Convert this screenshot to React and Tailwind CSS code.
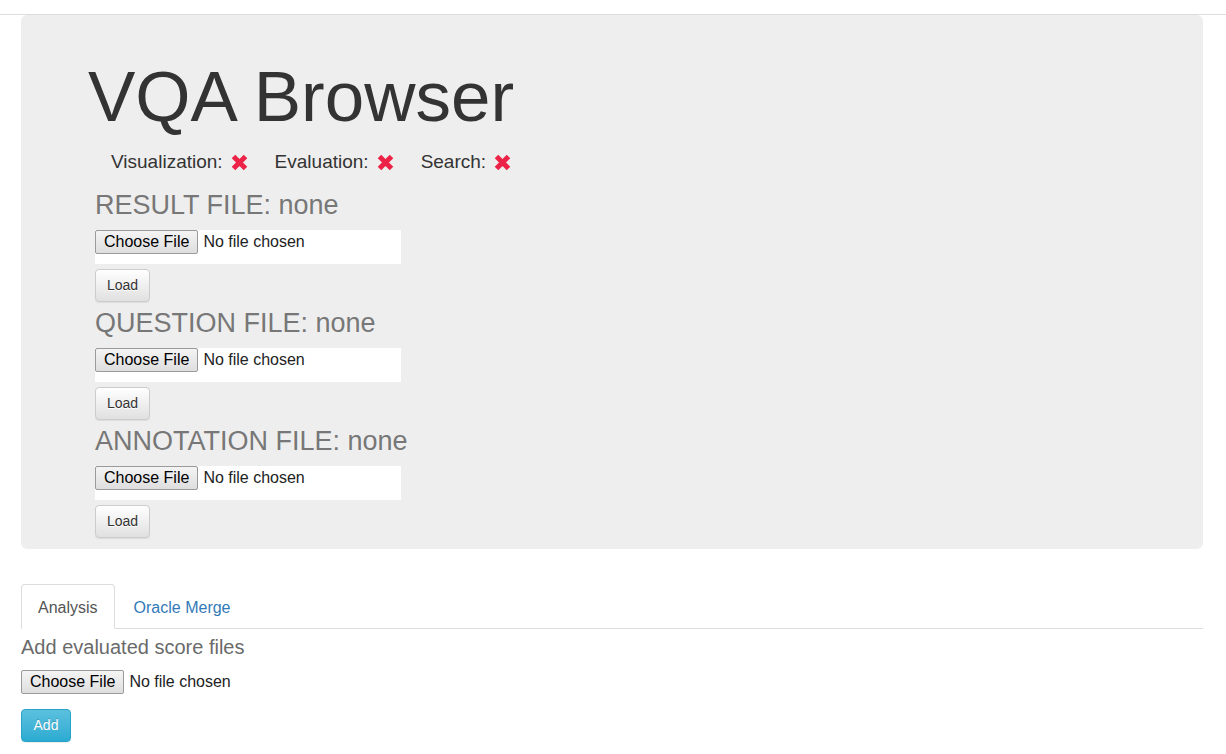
import React from "react"

function RemoveIcon() {
    return (
        <svg width="17" height="17" viewBox="0 0 17 17" className="shrink-0">
            <path d="M2.5 2.5 L14.5 14.5 M14.5 2.5 L2.5 14.5" stroke="#ec2346" strokeWidth="5" strokeLinecap="butt" fill="none" />
        </svg>
    )
}

function FakeFileInput() {
    return (
        <div className="flex items-center text-[16px] leading-none text-[#222]">
            <span className="flex h-[24px] items-center rounded-[2px] border border-[#9a9a9a] bg-linear-to-b from-[#f4f4f4] to-[#dedede] px-[8px] text-black">
                Choose File
            </span>
            <span className="ml-[5px]">No file chosen</span>
        </div>
    )
}

function LoadButton({ label }) {
    return (
        <button className="flex h-[33px] items-center rounded-[4px] border border-[#ccc] bg-linear-to-b from-white to-[#e0e0e0] px-[11px] text-[14px] text-[#333] shadow-[0_1px_1px_rgba(0,0,0,0.075)] [text-shadow:0_1px_0_#fff]">
            {label}
        </button>
    )
}

function FileSection({ title, first }) {
    return (
        <div className={first ? "" : "mt-[6px]"}>
            <h3 className="text-[27px] leading-[30px] text-[#777]">{title}</h3>
            <div className="mt-[10px] h-[34px] w-[306px] bg-white">
                <FakeFileInput />
            </div>
            <div className="mt-[5px]">
                <LoadButton label="Load" />
            </div>
        </div>
    )
}

function StatusItem({ label, first }) {
    return (
        <div className={"flex items-center " + (first ? "" : "ml-[27px]")}>
            <span>{label}</span>
            <span className="ml-[8px]"><RemoveIcon /></span>
        </div>
    )
}

export default function App() {
    return (
        <div className="min-h-screen bg-white font-['Liberation_Sans',Arial,sans-serif] text-[#333]">
            <div className="h-[15px] border-b border-[#ddd]" />

            <div className="ml-[21px] w-[1182px]">
                <div className="rounded-[6px] bg-[#eee] pt-[42px] pb-[11px]">
                    <h1 className="ml-[67px] text-[71px] leading-[80px] text-[#333]">VQA Browser</h1>

                    <div className="ml-[90px] mt-[13px] flex items-center text-[19px] leading-[24px] text-[#333]">
                        <StatusItem label="Visualization:" first />
                        <StatusItem label="Evaluation:" />
                        <StatusItem label="Search:" />
                    </div>

                    <div className="ml-[74px] mt-[16px]">
                        <FileSection title="RESULT FILE: none" first />
                        <FileSection title="QUESTION FILE: none" />
                        <FileSection title="ANNOTATION FILE: none" />
                    </div>
                </div>

                <ul className="mt-[35px] flex border-b border-[#ddd] text-[16px] leading-[22.86px]">
                    <li className="-mb-px">
                        <a className="block rounded-t-[4px] border border-[#ddd] border-b-transparent bg-white px-[16px] pt-[12px] pb-[8px] text-[#555]">Analysis</a>
                    </li>
                    <li className="-mb-px ml-[2px]">
                        <a className="block border border-transparent px-[16px] pt-[12px] pb-[8px] text-[#337ab7]">Oracle Merge</a>
                    </li>
                </ul>

                <h4 className="mt-[7px] text-[20px] leading-[22px] text-[#6a6a6a]">Add evaluated score files</h4>

                <div className="mt-[12px]">
                    <FakeFileInput />
                </div>

                <button className="mt-[15px] flex h-[33px] w-[50px] items-center justify-center rounded-[4px] border border-[#28a4c9] bg-linear-to-b from-[#5bc0de] to-[#2aabd2] text-[14px] text-white shadow-[0_1px_1px_rgba(0,0,0,0.075)] [text-shadow:0_-1px_0_rgba(0,0,0,0.2)]">
                    Add
                </button>
            </div>
        </div>
    )
}
